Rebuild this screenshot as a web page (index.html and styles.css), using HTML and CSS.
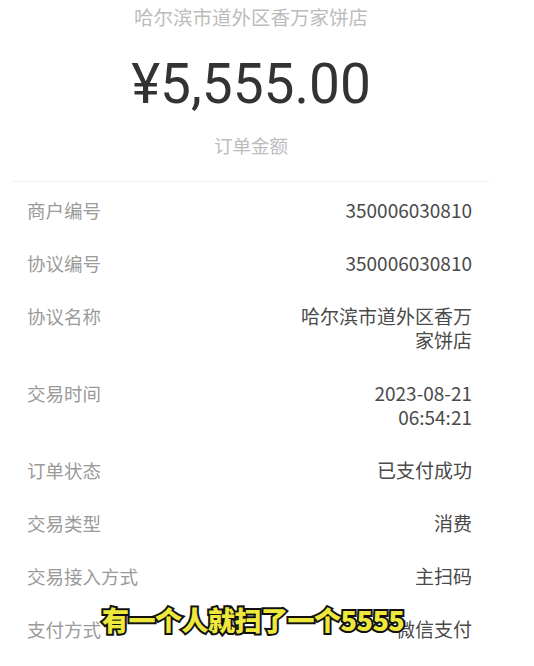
FILE: index.html
```html
<!DOCTYPE html>
<html lang="zh-CN">
<head>
  <meta charset="UTF-8">
  <meta name="viewport" content="width=device-width, initial-scale=1.0">
  <title>订单详情</title>
  <link rel="stylesheet" href="styles.css">
</head>
<body>
  <div class="card">
    <div class="summary">
      <div class="merchant">哈尔滨市道外区香万家饼店</div>
      <div class="amount">¥5,555.00</div>
      <div class="amount-label">订单金额</div>
    </div>
    <div class="details">
      <div class="row"><span class="key">商户编号</span><span class="value">350006030810</span></div>
      <div class="row"><span class="key">协议编号</span><span class="value">350006030810</span></div>
      <div class="row"><span class="key">协议名称</span><span class="value">哈尔滨市道外区香万家饼店</span></div>
      <div class="row"><span class="key">交易时间</span><span class="value value-time">2023-08-21 06:54:21</span></div>
      <div class="row"><span class="key">订单状态</span><span class="value">已支付成功</span></div>
      <div class="row"><span class="key">交易类型</span><span class="value">消费</span></div>
      <div class="row"><span class="key">交易接入方式</span><span class="value">主扫码</span></div>
      <div class="row"><span class="key">支付方式</span><span class="value">微信支付</span></div>
    </div>
  </div>
  <div class="subtitle">有一个人就扫了一个5555</div>
</body>
</html>
```

FILE: styles.css
```css
body {
  margin: 0;
  background-color: #ffffff;
  font-family: "Noto Sans CJK SC", "Noto Sans", sans-serif;
  height: 666px;
  overflow: hidden;
}
.card {
  margin-left: 12px;
  width: 478px;
}
.summary {
  text-align: center;
  border-bottom: 1px solid #f2f2f0;
  height: 182px;
  box-sizing: border-box;
  padding-top: 4px;
}
.merchant {
  font-size: 19.5px;
  line-height: 26px;
  color: #bcbcbc;
}
.amount {
  margin-top: 22px;
  font-family: Roboto, "Noto Sans", sans-serif;
  font-size: 55px;
  line-height: 64px;
  color: #333333;
}
.amount-label {
  margin-top: 16px;
  font-size: 18.5px;
  line-height: 26px;
  color: #bcbcbc;
}
.details {
  padding: 1px 18px 0 15px;
}
.row {
  display: flex;
  justify-content: space-between;
  align-items: flex-start;
  padding: 14.5px 0;
  font-size: 19px;
  line-height: 24px;
}
.key {
  color: #9a9a9a;
  font-size: 18.5px;
}
.value {
  max-width: 172px;
  text-align: right;
  color: #4a4a4a;
}
.value-time {
  max-width: 120px;
}
.subtitle {
  position: absolute;
  left: 102px;
  top: 604px;
  font-family: "Noto Sans CJK SC", sans-serif;
  font-weight: 900;
  font-size: 27px;
  line-height: 32px;
  letter-spacing: -0.5px;
  color: #eee83c;
  -webkit-text-stroke: 4px #111111;
  paint-order: stroke fill;
}
```
